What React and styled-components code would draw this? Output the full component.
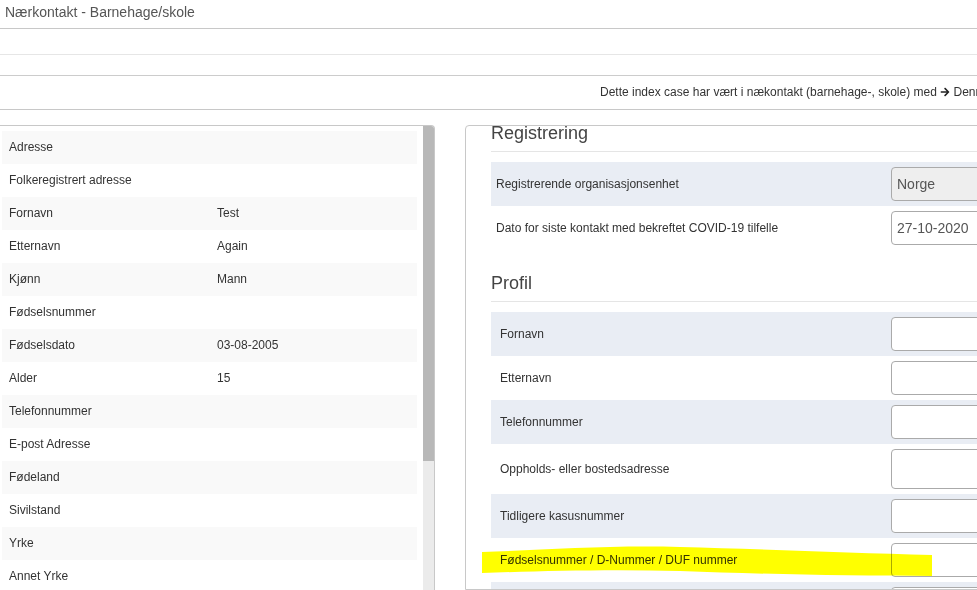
import styled, { createGlobalStyle } from 'styled-components';
import { FaArrowRight } from 'react-icons/fa';

const personRows = [
  { label: 'Adresse' },
  { label: 'Folkeregistrert adresse' },
  { label: 'Fornavn', value: 'Test' },
  { label: 'Etternavn', value: 'Again' },
  { label: 'Kjønn', value: 'Mann' },
  { label: 'Fødselsnummer' },
  { label: 'Fødselsdato', value: '03-08-2005' },
  { label: 'Alder', value: '15' },
  { label: 'Telefonnummer' },
  { label: 'E-post Adresse' },
  { label: 'Fødeland' },
  { label: 'Sivilstand' },
  { label: 'Yrke' },
  { label: 'Annet Yrke' },
  { label: 'Arbeidsgiver' },
]

const profileRows = [
  { label: 'Fornavn' },
  { label: 'Etternavn' },
  { label: 'Telefonnummer' },
  { label: 'Oppholds- eller bostedsadresse', tall: true },
  { label: 'Tidligere kasusnummer' },
  { label: 'Fødselsnummer / D-Nummer / DUF nummer' },
  { label: 'Fødselsdato' },
  { label: 'Kjønn' },
]

export default function App() {
  return <>
    <GlobalStyle />
    <Page>
      <TitleBar>Nærkontakt - Barnehage/skole</TitleBar>
      <Spacer $height={26} $line='#e6e6e6' />
      <Spacer $height={21} $line='#cccccc' />
      <InfoBar>
        Dette index case har vært i nækontakt (barnehage-, skole) med <Arrow /> Denne personen er registrert som nærkontakt
      </InfoBar>
      <Body>
        <PersonPanel>
          <PersonList>
            {personRows.map((row, index) => (
              <PersonRow key={index} $striped={index % 2 === 0}>
                <span>{row.label}</span>
                <span>{row.value}</span>
              </PersonRow>
            ))}
          </PersonList>
          <ScrollTrack>
            <ScrollThumb />
          </ScrollTrack>
        </PersonPanel>
        <FormPanel>
          <FormInner>
            <SectionTitle>Registrering</SectionTitle>
            <FormRow $shaded>
              <FieldLabel $indent={5}>Registrerende organisasjonsenhet</FieldLabel>
              <Field disabled value='Norge' readOnly $disabled />
            </FormRow>
            <FormRow>
              <FieldLabel $indent={5}>Dato for siste kontakt med bekreftet COVID-19 tilfelle</FieldLabel>
              <Field value='27-10-2020' readOnly />
            </FormRow>
            <SectionTitle $spaced>Profil</SectionTitle>
            {profileRows.map((row, index) => (
              <FormRow key={index} $shaded={index % 2 === 0}>
                <FieldLabel $indent={9}>{row.label}</FieldLabel>
                <Field $tall={row.tall} readOnly />
              </FormRow>
            ))}
          </FormInner>
        </FormPanel>
      </Body>
      <Highlight viewBox='0 0 977 590' width='977' height='590'>
        <path
          d='M482 552 C 540 550, 610 545, 680 547 C 760 549, 850 553, 932 555 L 932 576 C 850 576, 760 574, 680 571 C 610 569, 540 571, 482 573 Z'
          fill='#ffff00'
        />
      </Highlight>
    </Page>
  </>
}

const GlobalStyle = createGlobalStyle`
  html, body {
    margin: 0;
    height: 100%;
    overflow: hidden;
  }
  body {
    font-family: "Liberation Sans", Arial, sans-serif;
    color: #333;
    background: #fff;
  }
  * { box-sizing: border-box; }
`
const Page = styled.div`
  position: relative;
  height: 100vh;
  display: flex;
  flex-direction: column;
  overflow: hidden;
`
const TitleBar = styled.div`
  flex: none;
  height: 29px;
  padding-left: 5px;
  border-bottom: 1px solid #c8c8c8;
  font-size: 14px;
  line-height: 24px;
  color: #555;
`
const Spacer = styled.div`
  flex: none;
  height: ${props => props.$height}px;
  border-bottom: 1px solid ${props => props.$line};
`
const InfoBar = styled.div`
  flex: none;
  height: 34px;
  padding-left: 600px;
  border-bottom: 1px solid #c8c8c8;
  font-size: 12px;
  line-height: 33px;
  color: #333;
  white-space: nowrap;
  overflow: hidden;
`
const Arrow = styled(FaArrowRight)`
  width: 10px;
  height: 10px;
  vertical-align: -1px;
  color: #222;
`
const Body = styled.div`
  flex: 1;
  min-height: 0;
  display: flex;
  padding-top: 15px;
  overflow: hidden;
`
const PersonPanel = styled.div`
  flex: none;
  width: 435px;
  display: flex;
  border-top: 1px solid #c8c8c8;
  border-right: 1px solid #c8c8c8;
  border-top-right-radius: 4px;
  overflow: hidden;
`
const PersonList = styled.div`
  flex: 1;
  padding: 5px 6px 0 2px;
  overflow: hidden;
`
const ScrollTrack = styled.div`
  flex: none;
  width: 11px;
  background: #ebebeb;
`
const ScrollThumb = styled.div`
  height: 335px;
  background: #b8b8b8;
`
const PersonRow = styled.div`
  display: grid;
  grid-template-columns: 208px 1fr;
  align-items: center;
  height: 33px;
  padding-left: 7px;
  padding-bottom: 1px;
  font-size: 12px;
  color: #333;
  background: ${props => props.$striped ? '#f9f9f9' : '#fff'};
`
const FormPanel = styled.div`
  flex: none;
  width: 700px;
  margin-left: 30px;
  padding-left: 25px;
  border: 1px solid #c8c8c8;
  border-top-left-radius: 4px;
  overflow: hidden;
`
const FormInner = styled.div`
  margin-top: -3px;
`
const SectionTitle = styled.h3`
  margin: ${props => props.$spaced ? '23px' : '0'} 0 10px;
  padding-bottom: 8px;
  border-bottom: 1px solid #e5e5e5;
  font-size: 18px;
  line-height: 20px;
  font-weight: normal;
  color: #444;
`
const FormRow = styled.div`
  display: grid;
  grid-template-columns: 400px 260px;
  align-items: center;
  padding: 5px 0;
  background: ${props => props.$shaded ? '#e9edf4' : 'transparent'};
`
const FieldLabel = styled.label`
  padding-left: ${props => props.$indent}px;
  font-size: 12px;
  color: #333;
`
const Field = styled.input`
  height: ${props => props.$tall ? 40 : 34}px;
  padding: 0 5px;
  border: 1px solid #aaa;
  border-radius: 4px;
  font-family: "Liberation Sans", Arial, sans-serif;
  font-size: 14px;
  color: #555;
  -webkit-text-fill-color: #555;
  opacity: 1;
  background: ${props => props.$disabled ? '#eee' : '#fff'};
  outline: none;
`
const Highlight = styled.svg`
  position: absolute;
  left: 0;
  top: 0;
  pointer-events: none;
  mix-blend-mode: multiply;
`
